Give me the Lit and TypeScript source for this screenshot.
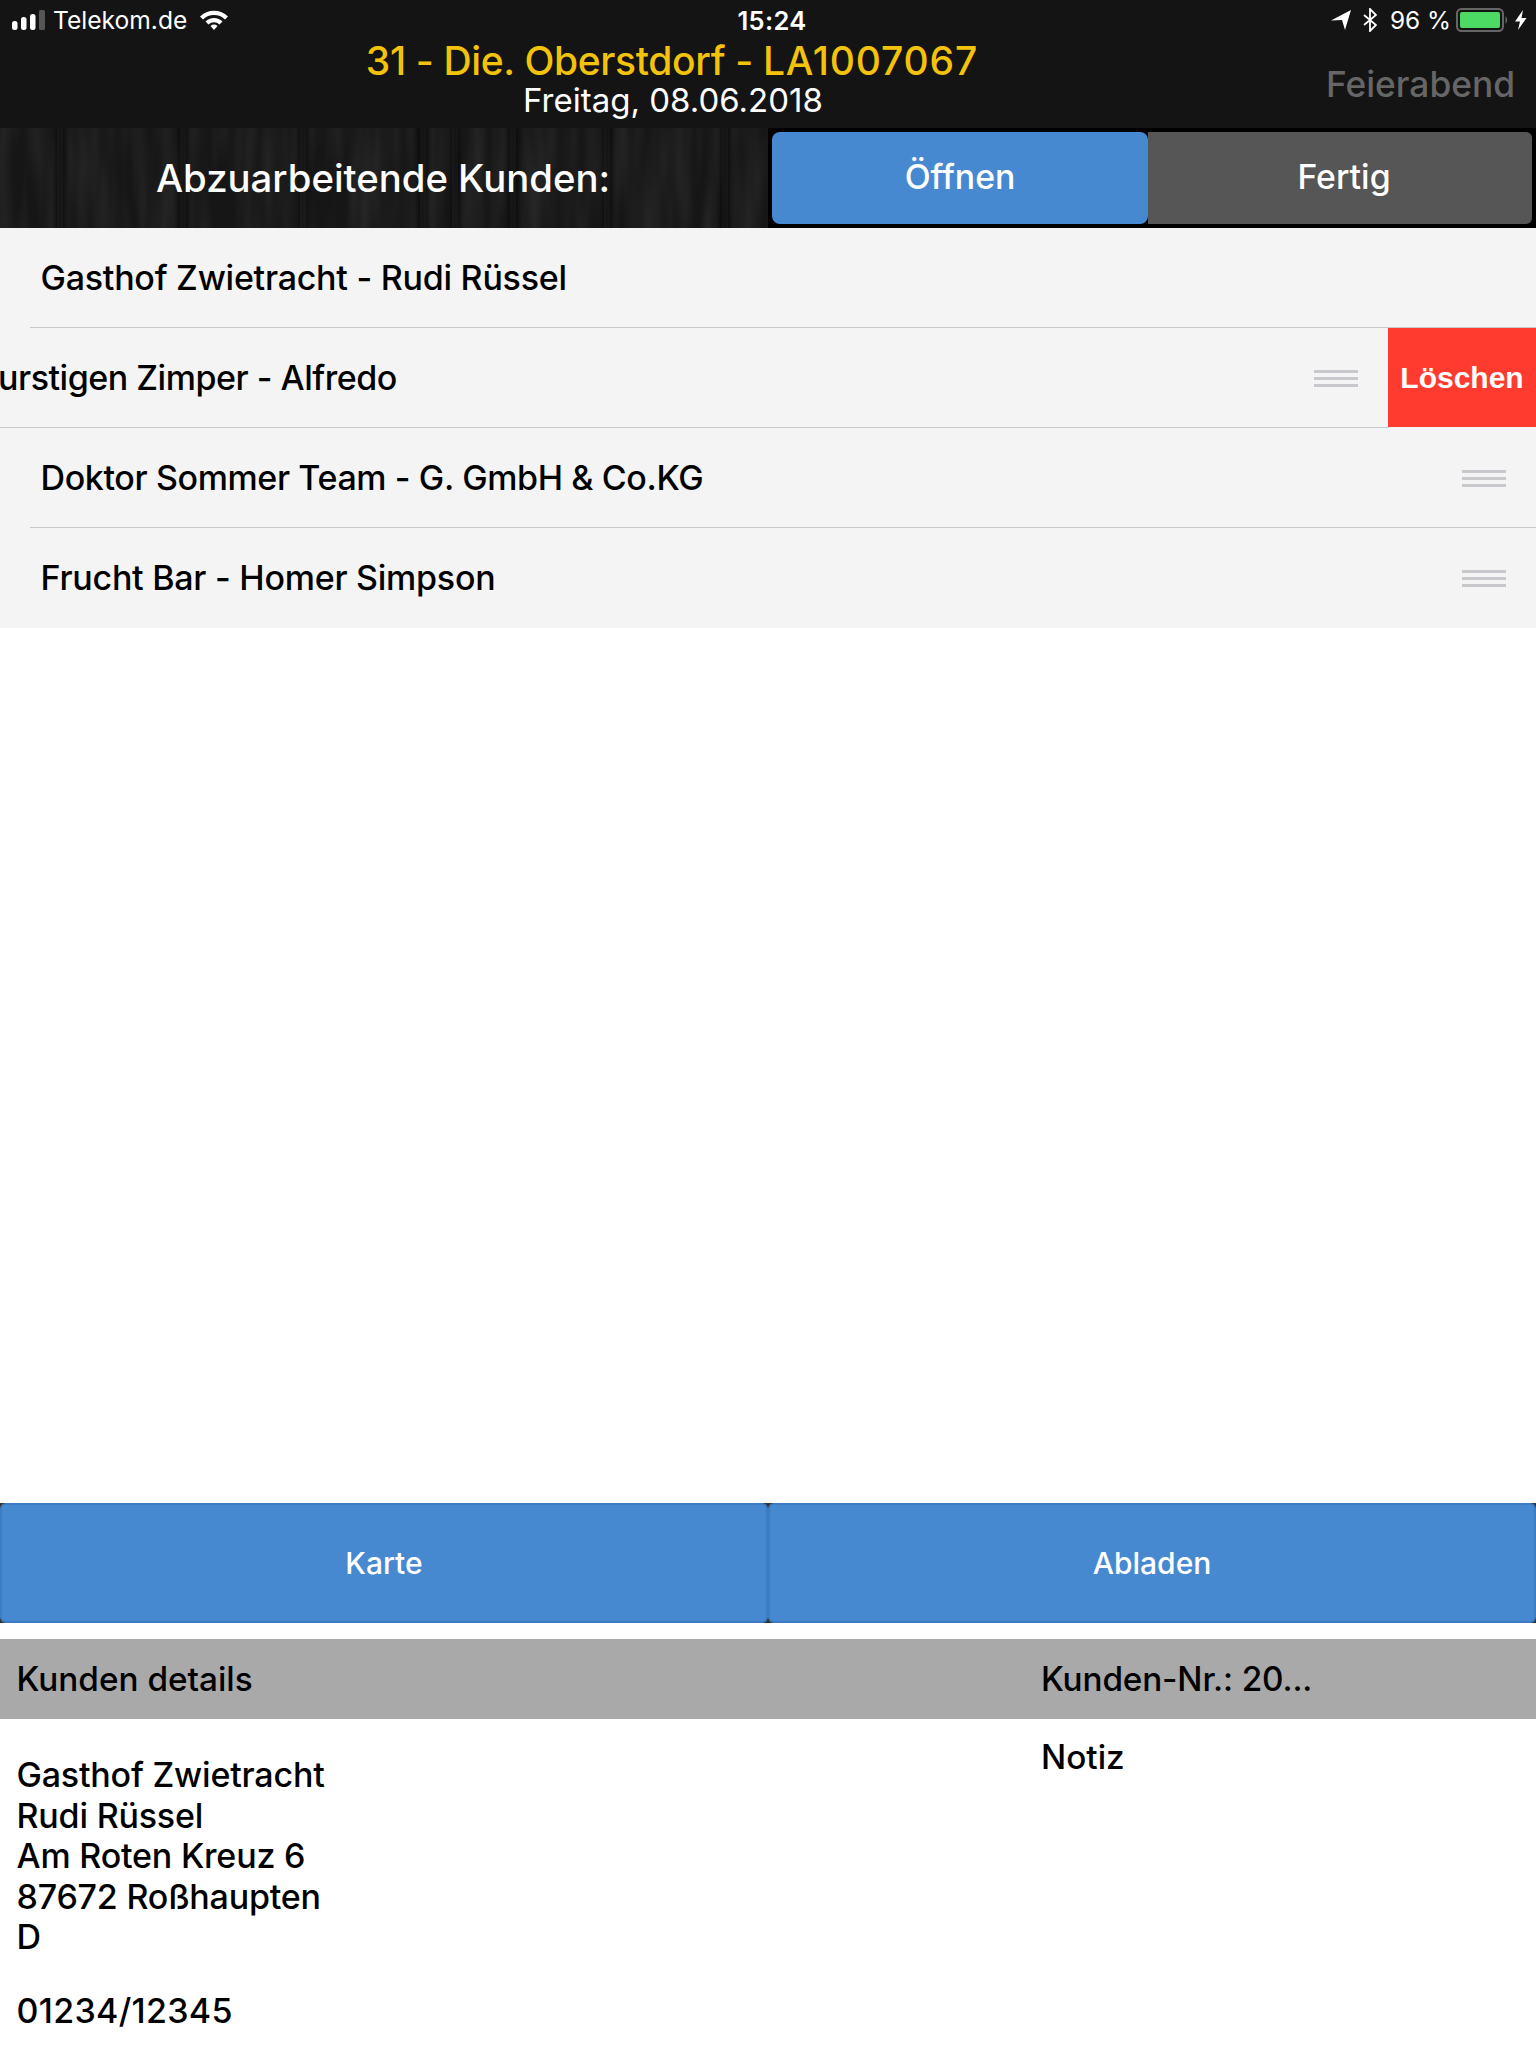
import { LitElement, html, css, svg } from "lit";
import { customElement } from "lit/decorators.js";

const handle = html`<div class="handle"><i></i><i></i><i></i></div>`;
const seams = [57, 180, 300, 420, 452, 510, 604, 722];
const woodSvg = svg`
  <defs>
    <filter id="grain" x="0" y="0" width="100%" height="100%">
      <feTurbulence type="fractalNoise" baseFrequency="0.07 0.008" numOctaves="2" seed="11"/>
      <feGaussianBlur stdDeviation="1.2 2"/>
      <feColorMatrix type="matrix" values="0 0 0 0 1  0 0 0 0 1  0 0 0 0 1  1 0 0 0 -0.3"/>
    </filter>
    <filter id="soft"><feGaussianBlur stdDeviation="3 0"/></filter>
  </defs>
  <rect width="768" height="100" fill="#161616"/>
  <rect width="768" height="100" filter="url(#grain)" opacity="0.12"/>
  <g filter="url(#soft)" fill="#080808">
    ${seams.map((x) => svg`<rect x=${x} y="0" width="6" height="100"/>`)}
  </g>
`;

@customElement("app-root")
export class AppRoot extends LitElement {
  static styles = css`
    :host { display: block; width: 1536px; height: 2048px; overflow: hidden; background: #fff; font-family: Inter, "Liberation Sans", sans-serif; color: #000; }
    .top { background: #141414; height: 128px; color: #fff; display: flex; flex-direction: column; }
    .status { height: 40px; display: grid; grid-template-columns: 1fr auto 1fr; align-items: center; font-size: 24.6px; padding: 0 9px 0 12px; flex: none; }
    .sl { display: flex; align-items: center; }
    .sr { display: flex; align-items: center; justify-content: flex-end; font-size: 24.4px; }
    .carrier { margin: 0 13px 0 7px; }
    .time { font-weight: 600; font-size: 25.5px; letter-spacing: 0.3px; margin-left: 5px; }
    .arrow { margin-right: 12px; }
    .bt { margin-right: 13px; }
    .pct { margin-right: 5px; }
    .bat { margin-right: 5px; }
    .head { flex: 1; display: flex; min-height: 0; }
    .titles { flex: 0 0 1344px; display: flex; flex-direction: column; align-items: center; }
    .t1 { color: #f3c30b; font-size: 39px; line-height: 42px; font-weight: 500; letter-spacing: -0.35px; }
    .code { letter-spacing: 0.85px; }
    .t2 { font-size: 33px; line-height: 36px; margin: 0 0 0 2px; }
    .end { flex: 1; min-width: 0; white-space: nowrap; display: flex; align-items: center; justify-content: flex-end; padding-right: 21px; color: #666; font-size: 35.3px; font-weight: 500; margin-top: 1px; }
    .bar { height: 100px; display: flex; }
    .wood { position: relative; width: 768px; display: flex; align-items: center; justify-content: center; color: #fff; font-size: 38.3px; font-weight: 500; overflow: hidden; padding-right: 2px; box-sizing: border-box; }
    .wood svg { position: absolute; inset: 0; }
    .wood span { position: relative; }
    .seg { flex: 1; background: #000; padding: 4px; display: flex; }
    .seg div { flex: 1; display: flex; align-items: center; justify-content: center; color: #fff; font-size: 33.8px; font-weight: 500; padding-bottom: 4px; }
    .seg .on { background: #4689d0; border-radius: 8px; flex: 0 0 376px; }
    .seg .off { background: #565656; border-radius: 0 6px 6px 0; padding-left: 8px; }
    .list { background: #f4f4f4; display: flex; flex-direction: column; }
    .row { height: 100px; box-sizing: border-box; position: relative; display: flex; align-items: center; font-size: 34px; font-weight: 500; letter-spacing: -0.25px; padding: 0 30px 0 40.5px; overflow: hidden; }
    .row .txt { flex: 1; margin-bottom: 2px; white-space: nowrap; }
    .row .tight { letter-spacing: -0.38px; }
    .line::after { content: ""; position: absolute; left: 30px; right: 0; bottom: 0; height: 1px; background: #c8c7cc; }
    .row.swiped { padding: 0; }
    .row.swiped::after { left: 0; right: 147px; }
    .swiped .txt { margin-left: -2px; letter-spacing: -0.48px; }
    .swiped .handle { margin-right: 30px; }
    .handle { width: 44px; display: flex; flex-direction: column; gap: 4px; flex: none; }
    .handle i { display: block; height: 3px; background: #c7c7cc; }
    .del { flex: 0 0 148px; align-self: stretch; margin-bottom: 1px; padding-top: 1px; background: #ff3b30; color: #fff; font-size: 30px; letter-spacing: 0; font-weight: 700; display: flex; align-items: center; justify-content: center; z-index: 1; box-sizing: border-box; font-family: "Liberation Sans", sans-serif; }
    .spacer { height: 875px; }
    .btns { display: flex; height: 120px; background: #333; }
    .btns div { flex: 1; box-sizing: border-box; background: #4689d0; border: 2px solid #3c7cc2; border-radius: 6px; color: #fff; display: flex; align-items: center; justify-content: center; font-size: 30px; font-weight: 500; }
    .dh { margin-top: 16px; height: 80px; background: #a9a9a9; display: flex; align-items: center; font-size: 33.3px; font-weight: 500; }
    .dh span:first-child, .addr { width: 1041px; box-sizing: border-box; padding-left: 16.5px; }
    .dh .nr { letter-spacing: -0.15px; }
    .cols { display: flex; font-weight: 500; line-height: 40.5px; }
    .addr { padding-top: 36px; font-size: 34px; letter-spacing: -0.2px; }
    .addr p { margin: 0; }
    .addr .phone { margin-top: 33px; letter-spacing: 0.3px; }
    .note { padding-top: 18px; font-size: 33.3px; }
  `;

  render() {
    return html`
      <div class="top">
        <div class="status">
          <div class="sl">
            <svg width="34" height="20" viewBox="0 0 34 20">
              <rect x="0" y="11" width="5.5" height="9" rx="2.5" fill="#fff"/>
              <rect x="9" y="7" width="5.5" height="13" rx="2.5" fill="#fff"/>
              <rect x="18" y="4" width="5.5" height="16" rx="2.5" fill="#fff"/>
              <rect x="27" y="0" width="6" height="20" rx="1.5" fill="#555"/>
            </svg>
            <span class="carrier">Telekom.de</span>
            <svg width="28" height="20" viewBox="0 0 28 20">
              <path d="M0 6.5 A20 20 0 0 1 28 6.5 L25 9.5 A16 16 0 0 0 3 9.5Z" fill="#fff"/>
              <path d="M5.5 11.5 A12 12 0 0 1 22.5 11.5 L19.5 14.5 A8 8 0 0 0 8.5 14.5Z" fill="#fff"/>
              <path d="M10.5 16 A5 5 0 0 1 17.5 16 L14 20Z" fill="#fff"/>
            </svg>
          </div>
          <div class="time">15:24</div>
          <div class="sr">
            <svg class="arrow" width="20" height="20" viewBox="0 0 20 20"><path d="M0 10.5 L20 0 L14 20 L11 10Z" fill="#fff"/></svg>
            <svg class="bt" width="14" height="24" viewBox="0 0 14 24" fill="none" stroke="#fff" stroke-width="1.8"><path d="M1 7 L13 17 L7 23 L7 1 L13 7 L1 17"/></svg>
            <span class="pct">96 %</span>
            <svg class="bat" width="53" height="24" viewBox="0 0 53 24">
              <rect x="1" y="1" width="46" height="22" rx="4.5" fill="none" stroke="#666" stroke-width="2"/>
              <rect x="4" y="4" width="40" height="16" rx="2" fill="#4cd964"/>
              <path d="M49.5 8 Q53 12 49.5 16Z" fill="#666"/>
            </svg>
            <svg width="13" height="20" viewBox="0 0 13 20"><path d="M9 0 L1 11.5 H6 L4 20 L12.5 8 H7.5Z" fill="#fff"/></svg>
          </div>
        </div>
        <div class="head">
          <div class="titles">
            <div class="t1">31 - Die. Oberstdorf - <span class="code">LA1007067</span></div>
            <div class="t2">Freitag, 08.06.2018</div>
          </div>
          <div class="end">Feierabend</div>
        </div>
      </div>
      <div class="bar">
        <div class="wood">
          <svg width="768" height="100" viewBox="0 0 768 100">${woodSvg}</svg>
          <span>Abzuarbeitende Kunden:</span>
        </div>
        <div class="seg"><div class="on">Öffnen</div><div class="off">Fertig</div></div>
      </div>
      <div class="list">
        <div class="row line"><span class="txt">Gasthof Zwietracht - Rudi Rüssel</span></div>
        <div class="row line swiped"><span class="txt">urstigen Zimper - Alfredo</span>${handle}<div class="del">Löschen</div></div>
        <div class="row line"><span class="txt tight">Doktor Sommer Team - G. GmbH &amp; Co.KG</span>${handle}</div>
        <div class="row"><span class="txt">Frucht Bar - Homer Simpson</span>${handle}</div>
      </div>
      <div class="spacer"></div>
      <div class="btns"><div>Karte</div><div>Abladen</div></div>
      <div class="dh"><span>Kunden details</span><span class="nr">Kunden-Nr.: 20...</span></div>
      <div class="cols">
        <div class="addr">
          <p>Gasthof Zwietracht</p>
          <p>Rudi Rüssel</p>
          <p>Am Roten Kreuz 6</p>
          <p>87672 Roßhaupten</p>
          <p>D</p>
          <p class="phone">01234/12345</p>
        </div>
        <div class="note">Notiz</div>
      </div>
    `;
  }
}
